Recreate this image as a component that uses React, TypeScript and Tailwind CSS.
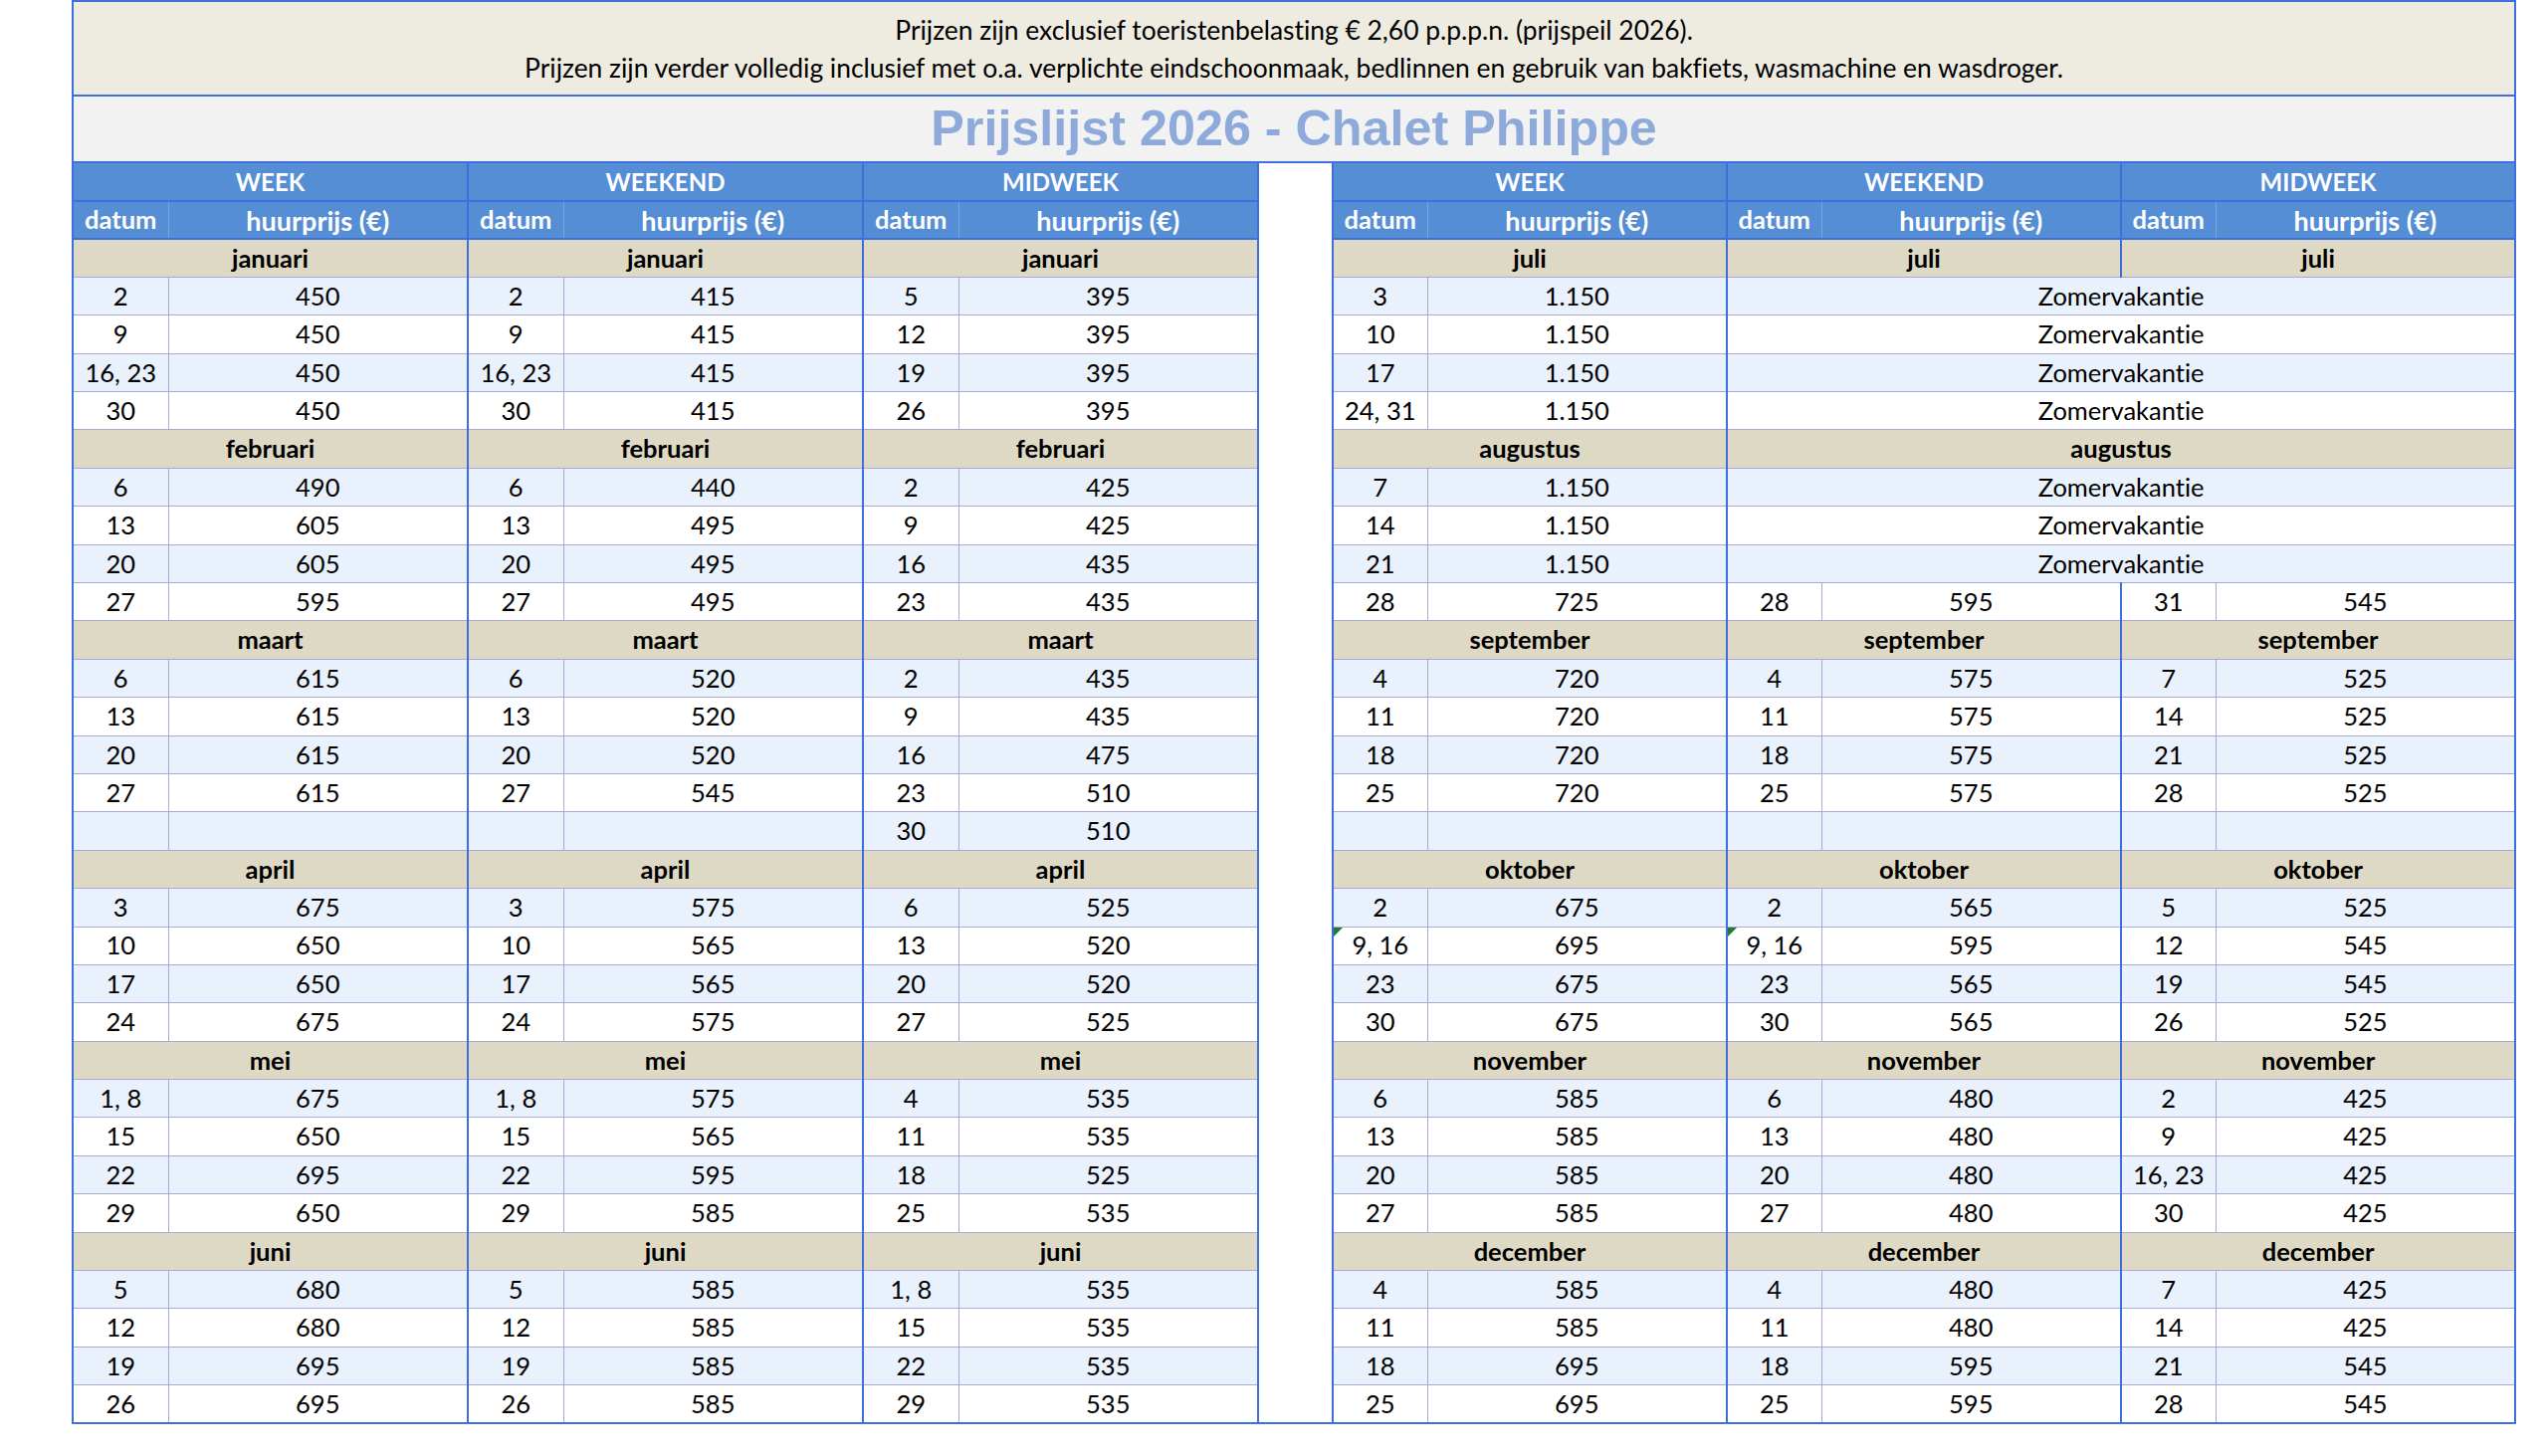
import React from 'react';

type Row = string[];
type Block = { m: string[]; r: Row[] };

// left half: januari - juni
const left: Block[] = [
  {
    m: ['januari', 'januari', 'januari'],
    r: [
      ['2', '450', '2', '415', '5', '395'],
      ['9', '450', '9', '415', '12', '395'],
      ['16, 23', '450', '16, 23', '415', '19', '395'],
      ['30', '450', '30', '415', '26', '395'],
    ],
  },
  {
    m: ['februari', 'februari', 'februari'],
    r: [
      ['6', '490', '6', '440', '2', '425'],
      ['13', '605', '13', '495', '9', '425'],
      ['20', '605', '20', '495', '16', '435'],
      ['27', '595', '27', '495', '23', '435'],
    ],
  },
  {
    m: ['maart', 'maart', 'maart'],
    r: [
      ['6', '615', '6', '520', '2', '435'],
      ['13', '615', '13', '520', '9', '435'],
      ['20', '615', '20', '520', '16', '475'],
      ['27', '615', '27', '545', '23', '510'],
      ['', '', '', '', '30', '510'],
    ],
  },
  {
    m: ['april', 'april', 'april'],
    r: [
      ['3', '675', '3', '575', '6', '525'],
      ['10', '650', '10', '565', '13', '520'],
      ['17', '650', '17', '565', '20', '520'],
      ['24', '675', '24', '575', '27', '525'],
    ],
  },
  {
    m: ['mei', 'mei', 'mei'],
    r: [
      ['1, 8', '675', '1, 8', '575', '4', '535'],
      ['15', '650', '15', '565', '11', '535'],
      ['22', '695', '22', '595', '18', '525'],
      ['29', '650', '29', '585', '25', '535'],
    ],
  },
  {
    m: ['juni', 'juni', 'juni'],
    r: [
      ['5', '680', '5', '585', '1, 8', '535'],
      ['12', '680', '12', '585', '15', '535'],
      ['19', '695', '19', '585', '22', '535'],
      ['26', '695', '26', '585', '29', '535'],
    ],
  },
];

// right half: juli - december ('Z' = zomervakantie over weekend + midweek, '!' = groen hoekje)
const right: Block[] = [
  {
    m: ['juli', 'juli', 'juli'],
    r: [
      ['3', '1.150', 'Z'],
      ['10', '1.150', 'Z'],
      ['17', '1.150', 'Z'],
      ['24, 31', '1.150', 'Z'],
    ],
  },
  {
    m: ['augustus', 'augustus'],
    r: [
      ['7', '1.150', 'Z'],
      ['14', '1.150', 'Z'],
      ['21', '1.150', 'Z'],
      ['28', '725', '28', '595', '31', '545'],
    ],
  },
  {
    m: ['september', 'september', 'september'],
    r: [
      ['4', '720', '4', '575', '7', '525'],
      ['11', '720', '11', '575', '14', '525'],
      ['18', '720', '18', '575', '21', '525'],
      ['25', '720', '25', '575', '28', '525'],
      ['', '', '', '', '', ''],
    ],
  },
  {
    m: ['oktober', 'oktober', 'oktober'],
    r: [
      ['2', '675', '2', '565', '5', '525'],
      ['!9, 16', '695', '!9, 16', '595', '12', '545'],
      ['23', '675', '23', '565', '19', '545'],
      ['30', '675', '30', '565', '26', '525'],
    ],
  },
  {
    m: ['november', 'november', 'november'],
    r: [
      ['6', '585', '6', '480', '2', '425'],
      ['13', '585', '13', '480', '9', '425'],
      ['20', '585', '20', '480', '16, 23', '425'],
      ['27', '585', '27', '480', '30', '425'],
    ],
  },
  {
    m: ['december', 'december', 'december'],
    r: [
      ['4', '585', '4', '480', '7', '425'],
      ['11', '585', '11', '480', '14', '425'],
      ['18', '695', '18', '595', '21', '545'],
      ['25', '695', '25', '595', '28', '545'],
    ],
  },
];

const groupEnd = 'border-r-2 border-r-[#3f6fdf]';
const thin = 'border-b border-b-[#a9a7d3]';

const MonthCells = ({ names }: { names: string[] }) => (
  <>
    {names.map((n, i) => (
      <td
        key={i}
        colSpan={names.length === 2 && i === 1 ? 4 : 2}
        className={`bg-[#ddd9c4] font-bold ${thin} ${groupEnd} ${i === 0 ? 'border-l-2 border-l-[#3f6fdf]' : ''}`}
      >
        {n}
      </td>
    ))}
  </>
);

const DataCells = ({ row, last }: { row: Row; last: boolean }) => {
  const bottom = last ? 'border-b-2 border-b-[#3f6fdf]' : thin;
  const pairs: [string, string][] = [[row[0], row[1]]];
  const zomer = row[2] === 'Z';
  if (!zomer) pairs.push([row[2], row[3]], [row[4], row[5]]);
  return (
    <>
      {pairs.map(([d, p], i) => {
        const flag = d.startsWith('!');
        return (
          <React.Fragment key={i}>
            <td
              className={`relative border-r border-r-[#a9a7d3] ${bottom} ${i === 0 ? 'border-l-2 border-l-[#3f6fdf]' : ''}`}
            >
              {flag && (
                <span className="absolute left-0 top-0 h-0 w-0 border-t-[9px] border-r-[9px] border-t-[#1f7a35] border-r-transparent" />
              )}
              {flag ? d.slice(1) : d}
            </td>
            <td className={`${groupEnd} ${bottom}`}>{p}</td>
          </React.Fragment>
        );
      })}
      {zomer && (
        <td colSpan={4} className={`${groupEnd} ${bottom}`}>
          Zomervakantie
        </td>
      )}
    </>
  );
};

const HeadGroups = () => (
  <>
    {['WEEK', 'WEEKEND', 'MIDWEEK'].map((g, i) => (
      <td
        key={g}
        colSpan={2}
        className={`bg-[#558ed5] text-[24px] font-bold text-white border-b-2 border-b-[#3f6fdf] ${groupEnd} ${i === 0 ? 'border-l-2 border-l-[#3f6fdf]' : ''}`}
      >
        {g}
      </td>
    ))}
  </>
);

const HeadCols = () => (
  <>
    {[0, 1, 2].map((i) => (
      <React.Fragment key={i}>
        <td
          className={`bg-[#558ed5] font-bold text-white border-b-2 border-b-[#3f6fdf] border-r border-r-[#7fa3e2] ${i === 0 ? 'border-l-2 border-l-[#3f6fdf]' : ''}`}
        >
          datum
        </td>
        <td className={`bg-[#558ed5] text-[27px] font-bold text-white border-b-2 border-b-[#3f6fdf] ${groupEnd}`}>
          huurprijs (€)
        </td>
      </React.Fragment>
    ))}
  </>
);

const App = () => {
  const rows: { l: React.ReactNode; r: React.ReactNode; bg: string }[] = [];
  left.forEach((b, bi) => {
    const rb = right[bi];
    rows.push({ l: <MonthCells names={b.m} />, r: <MonthCells names={rb.m} />, bg: '' });
    b.r.forEach((row, ri) => {
      const last = bi === left.length - 1 && ri === b.r.length - 1;
      rows.push({
        l: <DataCells row={row} last={last} />,
        r: <DataCells row={rb.r[ri]} last={last} />,
        bg: ri % 2 === 0 ? 'bg-[#e9f1fd]' : 'bg-white',
      });
    });
  });

  const widths = [96, 301, 96, 301, 96, 301, 75, 95, 301, 95, 301, 95, 301];

  return (
    <div className="min-h-screen bg-white pl-[72px]">
      <table className="w-[2455px] table-fixed border-collapse font-['Lato',sans-serif] text-[25.5px] text-black [font-variant-ligatures:none] [&_td]:p-0 [&_td]:text-center [&_td]:align-middle">
        <colgroup>
          {widths.map((w, i) => (
            <col key={i} className={`${['w-[96px]', 'w-[301px]', 'w-[75px]', 'w-[95px]'][[96, 301, 75, 95].indexOf(w)]}`} />
          ))}
        </colgroup>
        <tbody>
          <tr className="h-[95px]">
            <td colSpan={13} className="border-2 border-[#3f6fdf] bg-[#eeece1] text-[26.4px] leading-[38px]">
              <div>Prijzen zijn exclusief toeristenbelasting € 2,60 p.p.p.n. (prijspeil 2026).</div>
              <div>
                Prijzen zijn verder volledig inclusief met o.a. verplichte eindschoonmaak, bedlinnen en gebruik van
                bakfiets, wasmachine en wasdroger.
              </div>
            </td>
          </tr>
          <tr className="h-[67px]">
            <td
              colSpan={13}
              className="border-x-2 border-b-2 border-[#3f6fdf] bg-[#f2f2f2] pt-1 font-['Liberation_Sans',Arial,sans-serif] text-[50.3px] font-bold leading-none text-[#8eaadb]"
            >
              Prijslijst 2026 - Chalet Philippe
            </td>
          </tr>
          <tr className="h-[39px] leading-none">
            <HeadGroups />
            <td rowSpan={33} className="border-x-2 border-b-2 border-[#3f6fdf] bg-white" />
            <HeadGroups />
          </tr>
          <tr className="h-[38px] leading-none">
            <HeadCols />
            <HeadCols />
          </tr>
          {rows.map((r, i) => (
            <tr key={i} className={`h-[38.4px] leading-none ${r.bg}`}>
              {r.l}
              {r.r}
            </tr>
          ))}
        </tbody>
      </table>
    </div>
  );
};

export default App;
